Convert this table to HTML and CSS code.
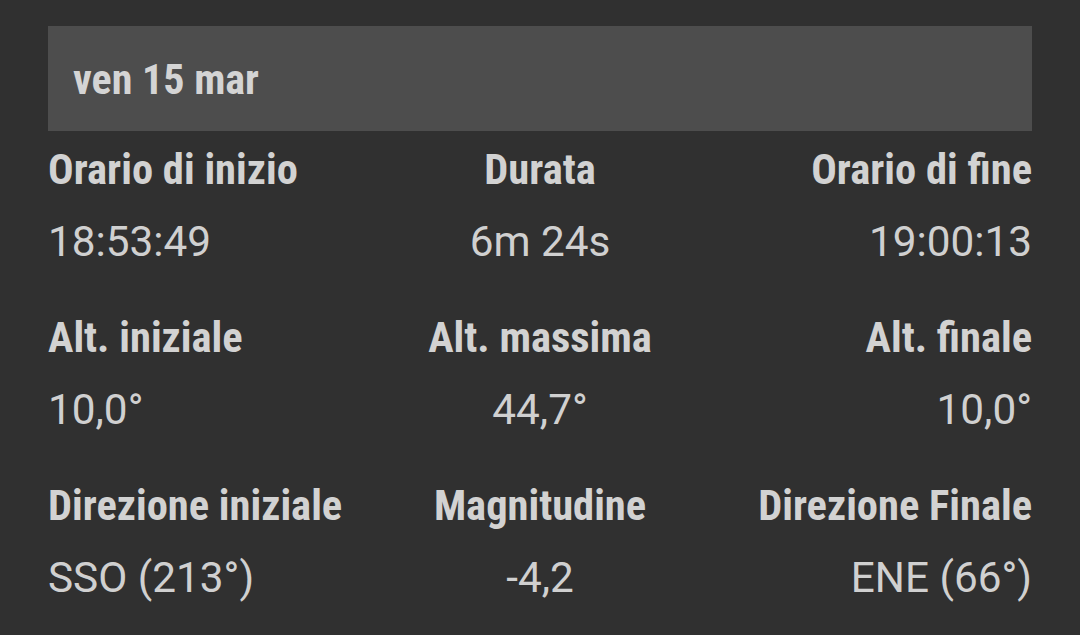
FILE: index.html
```html
<!DOCTYPE html>
<html lang="it">
<head>
<meta charset="utf-8">
<link rel="stylesheet" href="styles.css">
</head>
<body>
<div class="page">
  <div class="day">ven 15 mar</div>
  <div class="grid">
    <div class="cell left"><div class="label">Orario di inizio</div><div class="value">18:53:49</div></div>
    <div class="cell center"><div class="label">Durata</div><div class="value">6m 24s</div></div>
    <div class="cell right"><div class="label">Orario di fine</div><div class="value">19:00:13</div></div>
    <div class="cell left"><div class="label">Alt. iniziale</div><div class="value">10,0°</div></div>
    <div class="cell center"><div class="label">Alt. massima</div><div class="value">44,7°</div></div>
    <div class="cell right"><div class="label">Alt. finale</div><div class="value">10,0°</div></div>
    <div class="cell left"><div class="label">Direzione iniziale</div><div class="value">SSO (213°)</div></div>
    <div class="cell center"><div class="label">Magnitudine</div><div class="value">-4,2</div></div>
    <div class="cell right"><div class="label">Direzione Finale</div><div class="value">ENE (66°)</div></div>
  </div>
</div>
</body>
</html>
```
FILE: styles.css
```css
html, body {
  margin: 0;
  padding: 0;
  background: #303030;
}
.page {
  width: 1080px;
  height: 635px;
  box-sizing: border-box;
  padding: 26px 48px 0 48px;
  color: #d2d2d2;
  font-family: Roboto, "Liberation Sans", sans-serif;
}
.day {
  height: 105px;
  box-sizing: border-box;
  background: #4d4d4d;
  padding: 30px 0 0 25px;
  font-size: 42px;
  line-height: 48px;
  font-weight: 700;
  font-stretch: 75%;
  color: #d4d4d4;
}
.grid {
  display: grid;
  grid-template-columns: 1fr 1fr 1fr;
  row-gap: 48px;
  padding-top: 15px;
}
.cell { display: flex; flex-direction: column; }
.left { align-items: flex-start; }
.center { align-items: center; }
.right { align-items: flex-end; }
.label {
  font-size: 42.5px;
  line-height: 48px;
  font-weight: 700;
  font-stretch: 75%;
  color: #d2d2d2;
  margin-bottom: 24px;
  white-space: nowrap;
}
.value {
  font-size: 42.3px;
  line-height: 48px;
  font-weight: 400;
  color: #d0d0d0;
  white-space: nowrap;
}
```
